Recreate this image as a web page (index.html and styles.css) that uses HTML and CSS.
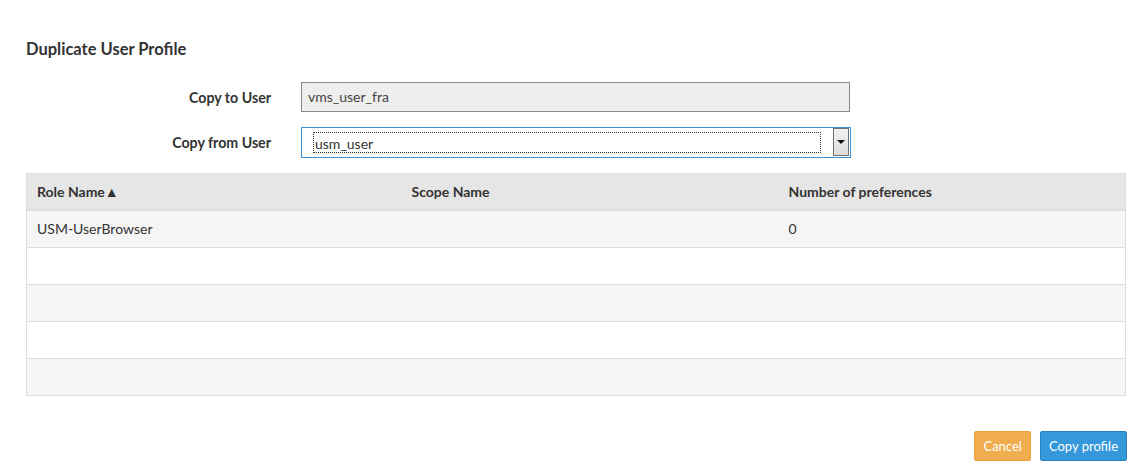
FILE: index.html
```html
<!DOCTYPE html>
<html>
<head>
<meta charset="utf-8">
<link rel="stylesheet" href="styles.css">
</head>
<body>
<div class="page">
  <h1 class="title">Duplicate User Profile</h1>
  <div class="form">
    <div class="form-row">
      <label class="label">Copy to User</label>
      <div class="input readonly">vms_user_fra</div>
    </div>
    <div class="form-row">
      <label class="label">Copy from User</label>
      <div class="select">
        <div class="select-value"><span class="focus">usm_user</span></div>
        <div class="select-btn"><span class="arrow"></span></div>
      </div>
    </div>
  </div>
  <table class="grid">
    <thead>
      <tr>
        <th class="c1">Role Name▲</th>
        <th class="c2">Scope Name</th>
        <th class="c3">Number of preferences</th>
      </tr>
    </thead>
    <tbody>
      <tr class="odd"><td>USM-UserBrowser</td><td></td><td>0</td></tr>
      <tr><td></td><td></td><td></td></tr>
      <tr class="odd"><td></td><td></td><td></td></tr>
      <tr><td></td><td></td><td></td></tr>
      <tr class="odd"><td></td><td></td><td></td></tr>
    </tbody>
  </table>
  <div class="actions">
    <button class="btn btn-cancel">Cancel</button>
    <button class="btn btn-copy">Copy profile</button>
  </div>
</div>
</body>
</html>
```
FILE: styles.css
```css
* { box-sizing: border-box; }
html, body { margin: 0; padding: 0; background: #fff; }
body {
  font-family: Lato, "Open Sans", "Liberation Sans", sans-serif;
  font-size: 14px;
  color: #333;
}
.page {
  padding: 40px 12px 0 26px;
}
.title {
  margin: 0;
  font-size: 16.5px;
  font-weight: bold;
  line-height: 18px;
  color: #333;
}
.form {
  margin-top: 24px;
  display: flex;
  flex-direction: column;
  gap: 15px;
}
.form-row {
  display: flex;
  align-items: center;
}
.label {
  width: 245px;
  text-align: right;
  font-weight: bold;
  font-size: 14.2px;
}
.input {
  margin-left: 30px;
  width: 549px;
  height: 30px;
  border: 1px solid #7f8c8d;
  background: #eee;
  padding: 0 6px;
  line-height: 28px;
  font-size: 14px;
  color: #444;
}
.select {
  margin-left: 30px;
  width: 550px;
  height: 31px;
  border: 1px solid #3a93d6;
  display: flex;
  align-items: stretch;
  background: #fff;
}
.select-value {
  flex: 1;
  padding: 4px 12px 4px 11px;
}
.focus {
  display: block;
  border: 1px dotted #333;
  height: 100%;
  padding-left: 1px;
  line-height: 22px;
  font-size: 14px;
  color: #333;
}
.select-btn {
  width: 16px;
  margin: 0 1px 1px 0;
  border: 1px solid #707070;
  background: linear-gradient(#f2f2f2, #dcdcdc);
  display: flex;
  align-items: center;
  justify-content: center;
}
.arrow {
  width: 0; height: 0;
  border-left: 4px solid transparent;
  border-right: 4px solid transparent;
  border-top: 4px solid #111;
}
.grid {
  margin-top: 15px;
  width: 1100px;
  border-collapse: collapse;
  border: 1px solid #ddd;
}
.grid th {
  background: #e6e6e6;
  height: 36px;
  text-align: left;
  font-weight: bold;
  font-size: 14px;
  padding: 0 10px;
  border-bottom: 2px solid #ddd;
  color: #333;
}
.grid .c1 { width: 375px; }
.grid .c2 { width: 377px; }
.grid td {
  height: 37px;
  padding: 0 10px;
  border-top: 1px solid #ddd;
  font-size: 14px;
  color: #333;
}
.grid tbody tr { background: #fff; }
.grid tbody tr.odd { background: #f5f5f5; }
.grid tbody tr:first-child td { border-top: 0; height: 38px; }
.actions {
  margin-top: 35px;
  display: flex;
  justify-content: flex-end;
  gap: 9px;
}
.btn {
  font-family: Lato, "Open Sans", "Liberation Sans", sans-serif;
  font-size: 13px;
  color: #fff;
  height: 30px;
  padding: 0 8px;
  border-radius: 2px;
  cursor: pointer;
}
.btn-cancel {
  background: #f0ad4e;
  border: 1px solid #eea236;
}
.btn-copy {
  background: #3498db;
  border: 1px solid #2a80b9;
}
```
